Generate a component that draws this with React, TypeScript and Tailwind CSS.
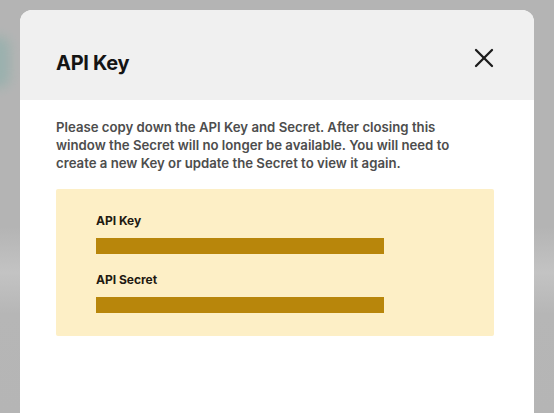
import { ReactNode } from 'react';

const font = { fontFamily: 'Inter, "Noto Sans", sans-serif' };

function CloseIcon() {
  return (
    <svg width="20" height="20" viewBox="0 0 20 20" fill="none" stroke="#1c1c1c" strokeWidth="2.3" strokeLinecap="round">
      <path d="M2 2 L18 18" />
      <path d="M18 2 L2 18" />
    </svg>
  );
}

function Field({ label, children }: { label: string; children?: ReactNode }) {
  return (
    <div className="flex flex-col">
      <div className="text-[12px] leading-4 font-bold text-[#1f1a12]">{label}</div>
      <div className="mt-[9px] h-4 w-[288px] bg-[#b8860b]">{children}</div>
    </div>
  );
}

export default function App() {
  return (
    <div
      style={font}
      className="relative h-[413px] w-[554px] overflow-hidden bg-[linear-gradient(180deg,#b4b4b4_0%,#b4b4b4_55%,#c3c3c3_66%,#b6b6b6_76%,#b5b5b5_100%)] pt-[10px] pl-[20px]"
    >
      <div className="absolute left-[-14px] top-[36px] h-[52px] w-[24px] rounded-full bg-[#8fb0ab] blur-[6px] opacity-70" />
      <div className="relative w-[514px] h-[420px] rounded-t-[12px] bg-white overflow-hidden">
        <div className="h-[90px] bg-[#f0f0f0] flex items-start justify-between pl-9 pr-10">
          <h2 className="mt-[41px] text-[20px] leading-6 font-bold text-[#141414] tracking-[-0.3px]">API Key</h2>
          <button className="mt-[38px]">
            <CloseIcon />
          </button>
        </div>
        <div className="pl-9 pt-[18px]">
          <p className="text-[13.2px] leading-[18px] font-semibold text-[#4d4d4d]">
            Please copy down the API Key and Secret. After closing this
            <br />
            window the Secret will no longer be available. You will need to
            <br />
            create a new Key or update the Secret to view it again.
          </p>
          <div className="mt-[17px] w-[438px] bg-[#fdefc6] rounded-[2px] pl-10 pt-6 pb-[23px] flex flex-col gap-[18px]">
            <Field label="API Key" />
            <Field label="API Secret" />
          </div>
        </div>
      </div>
    </div>
  );
}
